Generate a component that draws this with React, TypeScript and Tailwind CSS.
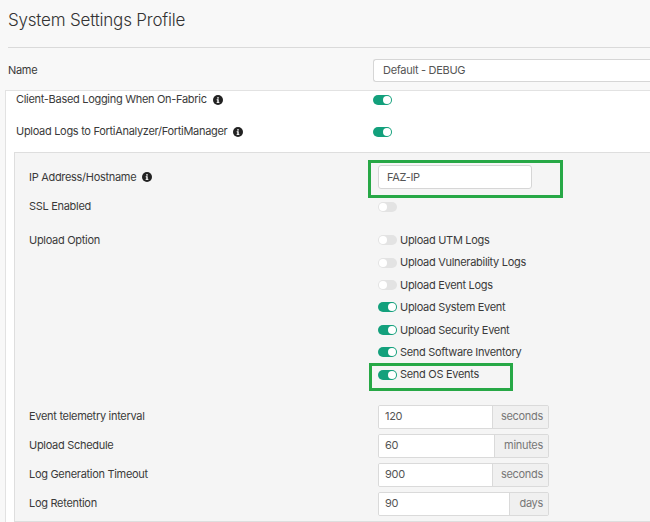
import React from "react";

function Toggle({ on }: { on: boolean }) {
  return on ? (
    <span className="relative inline-block h-[10px] w-[19px] shrink-0 rounded-full bg-[#13a07c]">
      <span className="absolute right-[1px] top-[1px] h-[8px] w-[8px] rounded-full bg-white" />
    </span>
  ) : (
    <span className="relative inline-block h-[10px] w-[19px] shrink-0 rounded-full bg-[#e3e3e3]">
      <span className="absolute left-[1px] top-[1px] h-[8px] w-[8px] rounded-full bg-white" />
    </span>
  );
}

function Info() {
  return (
    <svg width="10" height="10" viewBox="0 0 16 16" className="ml-[6px] inline-block">
      <circle cx="8" cy="8" r="8" fill="#222" />
      <rect x="6.9" y="7" width="2.2" height="5.5" fill="#fff" />
      <rect x="5.8" y="11" width="4.4" height="1.5" fill="#fff" />
      <rect x="5.8" y="7" width="2.5" height="1.4" fill="#fff" />
      <circle cx="8" cy="4.6" r="1.3" fill="#fff" />
    </svg>
  );
}

function NumRow({ label, value, unit, unitW }: { label: string; value: string; unit: string; unitW: string }) {
  return (
    <div className="flex h-[24px] items-center">
      <div className="w-[363px] pl-[14px]">{label}</div>
      <div className="flex h-[24px] w-[171px] overflow-hidden rounded-[2px] border border-[#dadada]">
        <div className="flex flex-1 items-center bg-white pl-[6px] text-[#555]">{value}</div>
        <div className={`flex items-center justify-end border-l border-[#dadada] bg-[#f0f0f0] pr-[5px] text-[#777] ${unitW}`}>{unit}</div>
      </div>
    </div>
  );
}

const opts: [string, boolean][] = [
  ["Upload UTM Logs", false],
  ["Upload Vulnerability Logs", false],
  ["Upload Event Logs", false],
  ["Upload System Event", true],
  ["Upload Security Event", true],
  ["Send Software Inventory", true],
  ["Send OS Events", true],
];

export default function App() {
  return (
    <div className="h-[522px] w-[650px] overflow-hidden bg-[#f8f8f8] font-['Inter',sans-serif] text-[11px] tracking-[-0.3px] text-[#3a3a3a]">
      <div className="flex h-[47px] items-start pl-[8px] pt-[8px] text-[17px] font-light tracking-[-0.2px] text-[#333]">
        System Settings Profile
      </div>
      <div className="ml-[8px] border-t border-[#dadada]" />
      <div className="flex h-[42px] items-center pt-[3px]">
        <div className="w-[373px] pl-[8px]">Name</div>
        <div className="flex h-[23px] flex-1 items-center rounded-l-[3px] border border-r-0 border-[#d6d6d6] bg-white pl-[9px] text-[#555]">
          Default - DEBUG
        </div>
      </div>
      <div className="ml-[5px] border-l border-t border-[#e2e2e2] bg-white pb-[3px]">
        <div className="flex h-[17px] items-center">
          <div className="flex w-[367px] items-center pl-[10px]">
            Client-Based Logging When On-Fabric
            <Info />
          </div>
          <Toggle on />
        </div>
        <div className="mt-[14px] flex h-[19px] items-center">
          <div className="flex w-[367px] items-center pl-[10px]">
            Upload Logs to FortiAnalyzer/FortiManager
            <Info />
          </div>
          <Toggle on />
        </div>
        <div className="ml-[8px] mt-[11px] border-b border-l border-t border-[#dedede] bg-[#f5f5f5] pb-[5px] pt-[12px]">
          <div className="flex h-[24px] items-center">
            <div className="flex w-[363px] items-center pl-[14px]">
              IP Address/Hostname
              <Info />
            </div>
            <div className="relative">
              <div className="flex h-[24px] w-[154px] items-center rounded-[3px] border border-[#d6d6d6] bg-white pl-[8px] text-[#555]">
                FAZ-IP
              </div>
              <div className="absolute left-[-10px] top-[-5px] h-[38px] w-[195px] border-[3px] border-[#27a846]" />
            </div>
          </div>
          <div className="mt-[6px] flex h-[23px] items-center">
            <div className="w-[363px] pl-[14px]">SSL Enabled</div>
            <Toggle on={false} />
          </div>
          <div className="mt-[11px] flex items-start">
            <div className="flex h-[22.4px] w-[363px] items-center pl-[14px]">Upload Option</div>
            <div className="flex flex-col">
              {opts.map(([t, on], i) => (
                <div key={t} className="relative flex h-[22.4px] items-center gap-[3px]">
                  <Toggle on={on} />
                  <span>{t}</span>
                  {i === 6 && (
                    <div className="absolute left-[-9px] top-[0px] h-[28px] w-[144px] border-[3px] border-[#27a846]" />
                  )}
                </div>
              ))}
            </div>
          </div>
          <div className="mt-[19px] flex flex-col gap-[5px]">
            <NumRow label="Event telemetry interval" value="120" unit="seconds" unitW="w-[56px]" />
            <NumRow label="Upload Schedule" value="60" unit="minutes" unitW="w-[54px]" />
            <NumRow label="Log Generation Timeout" value="900" unit="seconds" unitW="w-[56px]" />
            <NumRow label="Log Retention" value="90" unit="days" unitW="w-[39px]" />
          </div>
        </div>
      </div>
    </div>
  );
}
